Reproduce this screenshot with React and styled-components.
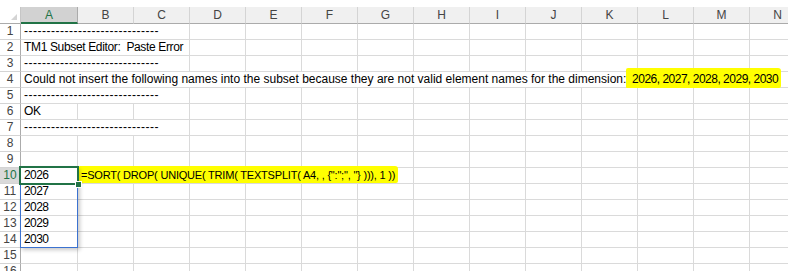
import styled, { createGlobalStyle } from "styled-components";

const GlobalStyle = createGlobalStyle`
  html, body {
    margin: 0;
    background: #fff;
    overflow: hidden;
  }
  body {
    font-family: "Liberation Sans", Arial, sans-serif;
  }
`;

const COLS = ["A", "B", "C", "D", "E", "F", "G", "H", "I", "J", "K", "L", "M", "N"];
const ROW_COUNT = 16;
const ACTIVE_COL = 0;
const ACTIVE_ROW = 10;

const DASHES = "-".repeat(30);

// tracking: letter-spacing to bring Liberation Sans close to the Calibri widths of the sheet
const content = {
  1: [{ col: 0, span: 3, dashes: true }],
  2: [{ col: 0, span: 3, text: "TM1 Subset Editor:  Paste Error", tracking: -0.35 }],
  3: [{ col: 0, span: 3, dashes: true }],
  4: [
    {
      col: 0,
      span: 14,
      text: "Could not insert the following names into the subset because they are not valid element names for the dimension:",
      marker: "  2026, 2027, 2028, 2029, 2030",
    },
  ],
  5: [{ col: 0, span: 3, dashes: true }],
  6: [{ col: 0, span: 1, text: "OK", tracking: -0.4 }],
  7: [{ col: 0, span: 3, dashes: true }],
  10: [
    { col: 0, span: 1, text: "2026", tracking: -0.6 },
    {
      col: 1,
      span: 6,
      formula: '=SORT( DROP( UNIQUE( TRIM( TEXTSPLIT( A4, , {":";", "} ))), 1 ))',
      tracking: -0.2,
    },
  ],
  11: [{ col: 0, span: 1, text: "2027", tracking: -0.6 }],
  12: [{ col: 0, span: 1, text: "2028", tracking: -0.6 }],
  13: [{ col: 0, span: 1, text: "2029", tracking: -0.6 }],
  14: [{ col: 0, span: 1, text: "2030", tracking: -0.6 }],
};

const App = () => {
  const rows = [];
  for (let r = 1; r <= ROW_COUNT; r++) {
    const items = content[r] || [];
    const cells = [];
    let c = 0;
    while (c < COLS.length) {
      const item = items.find((it) => it.col === c);
      if (item) {
        cells.push(
          <Cell
            key={`${r}-${c}`}
            $row={r}
            $col={c}
            $span={item.span}
            $formula={!!item.formula}
            $tracking={item.tracking || 0}
          >
            {item.dashes && <Dashes>{DASHES}</Dashes>}
            {item.text}
            {item.marker && <Marker>{item.marker}</Marker>}
            {item.formula && <FormulaMarker>{item.formula}</FormulaMarker>}
          </Cell>
        );
        c += item.span;
      } else {
        cells.push(<Cell key={`${r}-${c}`} $row={r} $col={c} $span={1} />);
        c += 1;
      }
    }
    rows.push(
      <RowHead key={`h-${r}`} $row={r} $active={r === ACTIVE_ROW}>
        {r}
      </RowHead>,
      ...cells
    );
  }

  return (
    <>
      <GlobalStyle />
      <Window>
        <Sheet>
          <Corner />
          {COLS.map((name, i) => (
            <ColHead key={name} $col={i} $active={i === ACTIVE_COL}>
              {name}
            </ColHead>
          ))}
          {rows}
          <SpillRange $row={10} $col={0} $rows={5} />
          <Selection $row={10} $col={0} />
        </Sheet>
      </Window>
    </>
  );
};

const Window = styled.div`
  width: 788px;
  height: 271px;
  overflow: hidden;
  padding-top: 7px;
  box-sizing: border-box;
  background: #fff;
`;

const Sheet = styled.div`
  display: grid;
  grid-template-columns: 21px 57px repeat(13, 56px);
  grid-template-rows: 17px repeat(${ROW_COUNT}, 16px);
  width: max-content;
  font-size: 12px;
  color: #000;
`;

const Corner = styled.div`
  grid-row: 1;
  grid-column: 1;
  position: relative;
  background: #fff;
  border-right: 1px solid #c6c6c6;
  border-bottom: 1px solid #ababab;
  box-sizing: border-box;

  &::after {
    content: "";
    position: absolute;
    right: 3px;
    bottom: 3px;
    border-style: solid;
    border-width: 0 0 6px 6px;
    border-color: transparent transparent #d4d4d4 transparent;
  }
`;

const ColHead = styled.div`
  grid-row: 1;
  grid-column: ${(p) => p.$col + 2};
  display: flex;
  align-items: center;
  justify-content: center;
  box-sizing: border-box;
  background: ${(p) => (p.$active ? "#d2d2d2" : "#f0f0f0")};
  color: ${(p) => (p.$active ? "#217346" : "#444")};
  border-right: 1px solid ${(p) => (p.$active ? "#ababab" : "#d4d4d4")};
  border-bottom: ${(p) => (p.$active ? "2px solid #217346" : "1px solid #ababab")};
  padding-top: ${(p) => (p.$active ? "1px" : "0")};
  font-size: 12px;
`;

const RowHead = styled.div`
  grid-row: ${(p) => p.$row + 1};
  grid-column: 1;
  display: flex;
  align-items: center;
  justify-content: center;
  box-sizing: border-box;
  background: ${(p) => (p.$active ? "#d9d9d9" : "#fff")};
  color: ${(p) => (p.$active ? "#217346" : "#444")};
  border-right: 1px solid ${(p) => (p.$active ? "#217346" : "#ababab")};
  border-bottom: 1px solid #d4d4d4;
  font-size: 12px;
  line-height: 15px;
`;

const Cell = styled.div`
  grid-row: ${(p) => p.$row + 1};
  grid-column: ${(p) => p.$col + 2} / span ${(p) => p.$span};
  box-sizing: border-box;
  border-right: 1px solid #dadada;
  border-bottom: 1px solid #dadada;
  padding-left: ${(p) => (p.$formula ? "1px" : "3px")};
  font-size: ${(p) => (p.$formula ? "11px" : "12px")};
  line-height: 15px;
  letter-spacing: ${(p) => p.$tracking}px;
  white-space: pre;
  overflow: visible;
  position: relative;
`;

const Dashes = styled.span`
  letter-spacing: 0.5px;
`;

const Marker = styled.span`
  background: #ffff00;
  padding: 4px 3px 2px 0;
  letter-spacing: -0.5px;
  border-radius: 2px 3px 2px 1px;
`;

const FormulaMarker = styled.span`
  background: #ffff00;
  padding: 3px 3px 2px 2px;
  border-radius: 1px 3px 2px 0;
`;

const SpillRange = styled.div`
  grid-row: ${(p) => p.$row + 1} / span ${(p) => p.$rows};
  grid-column: ${(p) => p.$col + 2};
  margin: -1px 0 0 -1px;
  border: 1px solid #3b72d0;
  box-shadow: 2px 2px 4px rgba(0, 0, 0, 0.22);
  pointer-events: none;
  z-index: 1;
`;

const Selection = styled.div`
  grid-row: ${(p) => p.$row + 1};
  grid-column: ${(p) => p.$col + 2};
  margin: -2px -1px -1px -2px;
  border: 2px solid #217346;
  position: relative;
  pointer-events: none;
  z-index: 2;

  &::after {
    content: "";
    position: absolute;
    right: -5px;
    bottom: -5px;
    width: 5px;
    height: 5px;
    background: #217346;
    border: 1px solid #fff;
  }
`;

export default App;
